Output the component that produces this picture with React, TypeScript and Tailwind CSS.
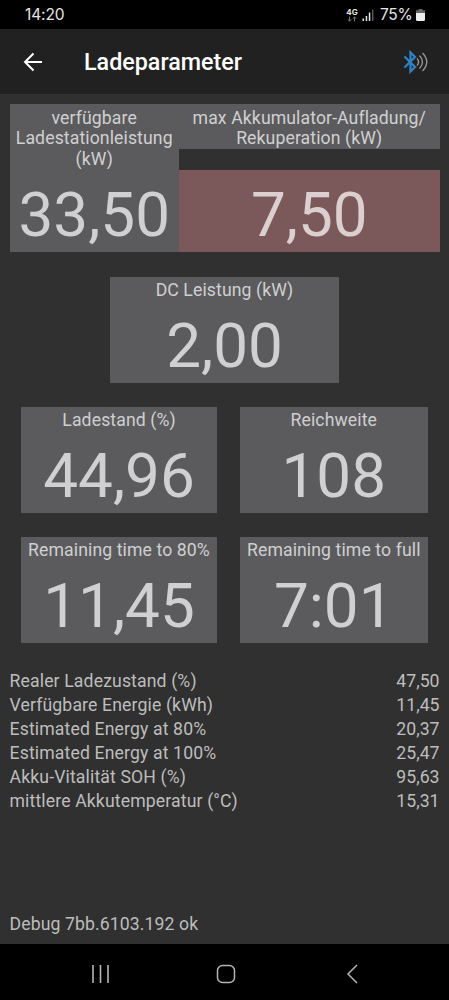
interface Reading {
  label: string
  value: string
}

const readings: Reading[] = [
  { label: 'Realer Ladezustand (%)', value: '47,50' },
  { label: 'Verfügbare Energie (kWh)', value: '11,45' },
  { label: 'Estimated Energy at 80%', value: '20,37' },
  { label: 'Estimated Energy at 100%', value: '25,47' },
  { label: 'Akku-Vitalität SOH (%)', value: '95,63' },
  { label: 'mittlere Akkutemperatur (°C)', value: '15,31' }
]

function BigValue({ value, className = '' }: { value: string; className?: string }) {
  return (
    <div className={`h-[82.5px] pt-[8px] text-center text-[62px] leading-[74px] ${className}`}>
      {value}
    </div>
  )
}

function Card({ label, value, className }: Reading & { className: string }) {
  return (
    <div className={`h-[106.5px] bg-[#5b5b5d] ${className}`}>
      <div className="h-[24px] pt-[3.6px] text-center leading-[20.7px] tracking-[0.1px] whitespace-nowrap text-[#cfcfd1]">{label}</div>
      <BigValue value={value} />
    </div>
  )
}

function StatusBar() {
  return (
    <div className="flex h-[29px] items-center bg-black pl-[25px] pr-[24px] pt-px text-[#e6e6e6]">
      <span className="font-['Inter'] text-[15.5px] tracking-[-0.1px]">14:20</span>
      <div className="ml-auto flex items-center">
        <div className="flex w-[12px] flex-col items-center">
          <span className="font-['Inter'] text-[8px] leading-[7px] font-bold">4G</span>
          <svg width="10" height="6" viewBox="0 0 10 6" fill="none" stroke="#777" strokeWidth="1">
            <path d="M2.5 .5v4.5M.7 3.3l1.8 1.8 1.8-1.8M7.5 5.5V1M5.7 2.7 7.5.9l1.8 1.8" />
          </svg>
        </div>
        <svg className="ml-[4px]" width="12" height="12" viewBox="0 0 12 12">
          <path d="M.5 9.5H2V12H.5zM3.7 7h1.5v5H3.7zM6.8 3.5h1.5V12H6.8z" fill="#e6e6e6" />
          <path d="M10 .5h1.5V12H10z" fill="#555" />
        </svg>
        <span className="ml-[6px] w-[33px] font-['Inter'] text-[15.5px] tracking-[-0.3px]">75%</span>
        <svg className="ml-[3px]" width="9" height="12" viewBox="0 0 9 12">
          <path d="M2.5 0h4v1.3H9V4H0V1.3h2.5z" fill="#666" />
          <path d="M0 4h9v6.500Q9 12 7.500 12h-6Q0 12 0 10.500z" fill="#eee" />
        </svg>
      </div>
    </div>
  )
}

function Header() {
  return (
    <div className="flex h-[65px] items-center bg-[#212121] pl-[23px] pr-[21px] text-white">
      <svg width="20" height="20" viewBox="0 0 20 20" fill="none" stroke="currentColor" strokeWidth="2">
        <path d="M19 10H2M10.500 1.500 2 10l8.500 8.500" />
      </svg>
      <h1 className="ml-[41px] pt-[2px] text-[23.3px] font-medium">Ladeparameter</h1>
      <svg className="ml-auto" width="25" height="26" viewBox="0 0 25 26" fill="none">
        <path d="m1.500 7.500 10.500 10.500-4.500 4.500V3.500L12 8 1.500 18.500" stroke="#2f83c5" strokeWidth="2.300" />
        <path d="M14 9.500q3.200 3.500 0 7" stroke="#999" strokeWidth="1.300" />
        <path d="M16.500 6.500q6 6.500 0 13" stroke="#999" strokeWidth="1.300" />
        <path d="M19.500 4q8.500 9 0 18" stroke="#999" strokeWidth="1.300" />
      </svg>
    </div>
  )
}

function NavBar() {
  return (
    <div className="flex h-[56px] items-center bg-black pt-[3px] pl-[91px] pr-[91px]">
      <svg width="20" height="20" viewBox="0 0 20 20" fill="none" stroke="#b5b5b5" strokeWidth="1.600">
        <path d="M2 1v18M9.500 1v18M17 1v18" />
      </svg>
      <svg className="ml-[105px]" width="20" height="20" viewBox="0 0 20 20" fill="none" stroke="#b5b5b5" strokeWidth="1.500">
        <rect x="1.500" y="1.500" width="17" height="17" rx="5" />
      </svg>
      <svg className="ml-auto" width="12" height="20" viewBox="0 0 12 20" fill="none" stroke="#b5b5b5" strokeWidth="1.500">
        <path d="M11 1 2 10l9 9" />
      </svg>
    </div>
  )
}

export default function App() {
  return (
    <div className="flex h-[1000px] w-[449px] flex-col overflow-hidden bg-[#303030] font-['Roboto',sans-serif] text-[17.65px] text-[#d0d0d2]">
      <StatusBar />
      <Header />

      <main className="flex flex-1 flex-col px-[9.5px] pt-[10px]">
        <div className="flex h-[148.4px]">
          <div className="w-[169.5px] bg-[#5b5b5d]">
            <div className="h-[65.9px] pt-[3.5px] text-center leading-[20.7px] tracking-[0.1px]">
              verfügbare<br />Ladestationleistung<br />(kW)
            </div>
            <BigValue value="33,50" />
          </div>
          <div className="flex flex-1 flex-col justify-between">
            <div className="h-[45px] bg-[#5b5b5d] pt-[3.5px] text-center leading-[20.7px] tracking-[0.1px]">
              max Akkumulator-Aufladung/<br />Rekuperation (kW)
            </div>
            <BigValue value="7,50" className="bg-[#7b595a] text-[#dccfcf]" />
          </div>
        </div>

        <Card label="DC Leistung (kW)" value="2,00" className="mt-[24.2px] w-[229.5px] self-center" />

        <div className="mt-[23.5px] flex gap-x-[23px] px-[11.5px]">
          <Card label="Ladestand (%)" value="44,96" className="w-[196px]" />
          <Card label="Reichweite" value="108" className="w-[187.5px]" />
        </div>
        <div className="mt-[23.5px] flex gap-x-[23px] px-[11.5px]">
          <Card label="Remaining time to 80%" value="11,45" className="w-[196px]" />
          <Card label="Remaining time to full" value="7:01" className="w-[187.5px]" />
        </div>

        <div className="mt-[25.8px] text-[#bdbdbd]">
          {readings.map((r) => (
            <div key={r.label} className="flex justify-between leading-[24.1px]">
              <span className="tracking-[0.13px]">{r.label}</span>
              <span>{r.value}</span>
            </div>
          ))}
        </div>

        <div className="mt-auto mb-[8px] leading-[24px] tracking-[0.1px] text-[#bdbdbd]">Debug 7bb.6103.192 ok</div>
      </main>

      <NavBar />
    </div>
  )
}
